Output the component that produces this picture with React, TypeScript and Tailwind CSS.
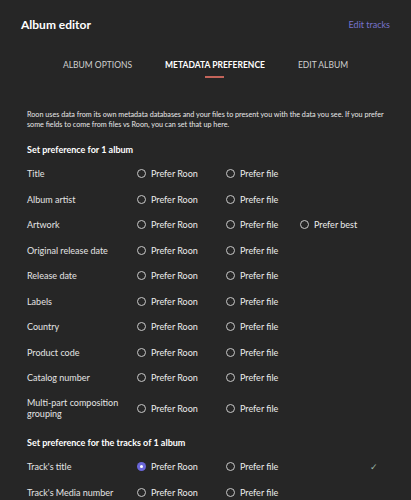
import React from 'react'

type Row = {
  label: string
  lines?: string[]
  best?: boolean
  selected?: 'roon' | 'file'
  check?: boolean
}

const albumRows: Row[] = [
  { label: 'Title' },
  { label: 'Album artist' },
  { label: 'Artwork', best: true },
  { label: 'Original release date' },
  { label: 'Release date' },
  { label: 'Labels' },
  { label: 'Country' },
  { label: 'Product code' },
  { label: 'Catalog number' },
  { label: 'Multi-part composition grouping', lines: ['Multi-part composition', 'grouping'] },
]

const trackRows: Row[] = [
  { label: "Track's title", selected: 'roon', check: true },
  { label: "Track's Media number" },
]

function Radio({ label, on }: { label: string; on?: boolean }) {
  return (
    <div className="flex items-center gap-[5px]">
      {on ? (
        <span className="w-[9px] h-[9px] rounded-full bg-[#6a66d8] flex items-center justify-center">
          <span className="w-[3px] h-[3px] rounded-full bg-white" />
        </span>
      ) : (
        <span className="w-[9px] h-[9px] rounded-full border border-[#c8c8c8]" />
      )}
      <span className="text-[9px] leading-[11px] text-[#ececec]">{label}</span>
    </div>
  )
}

function PrefRow({ row }: { row: Row }) {
  const tall = !!row.lines
  return (
    <div className={`flex items-center ${tall ? 'h-[35.5px]' : 'h-[25.5px]'}`}>
      <div className="w-[110px] text-[9px] leading-[11px] text-[#e4e4e4]">
        {row.lines ? row.lines.map((l) => <div key={l}>{l}</div>) : row.label}
      </div>
      <div className="w-[89px]">
        <Radio label="Prefer Roon" on={row.selected === 'roon'} />
      </div>
      <div className="w-[74px]">
        <Radio label="Prefer file" on={row.selected === 'file'} />
      </div>
      <div className="w-[70px]">{row.best && <Radio label="Prefer best" />}</div>
      {row.check && <span className="text-[9px] text-[#9cb8a9]">✓</span>}
    </div>
  )
}

export default function App() {
  return (
    <div className="w-[411px] h-[500px] overflow-hidden bg-[#262626] text-white font-['Lato','Liberation_Sans',sans-serif]">
      <div className="flex items-center justify-between h-[50px] px-[21px]">
        <h1 className="text-[12px] font-bold">Album editor</h1>
        <button className="text-[9px] text-[#7673cc]">Edit tracks</button>
      </div>

      <div className="flex justify-center gap-[33px] mt-[9px] text-[8.5px] leading-[12px]">
        <span className="text-[#d0d0d0]">ALBUM OPTIONS</span>
        <div className="flex flex-col items-center">
          <span className="font-bold text-white">METADATA PREFERENCE</span>
          <span className="mt-[5px] w-[19px] h-[2px] bg-[#c4645a]" />
        </div>
        <span className="text-[#d0d0d0]">EDIT ALBUM</span>
      </div>

      <div className="px-[27px]">
        <p className="mt-[32px] text-[7.2px] leading-[10px] text-[#e8e8e8]">
          Roon uses data from its own metadata databases and your files to present you with the data you see. If you prefer some fields to come from files vs Roon, you can set that up here.
        </p>

        <h2 className="mt-[14px] text-[9px] leading-[12px] font-bold">Set preference for 1 album</h2>
        <div className="mt-[5px]">
          {albumRows.map((r) => (
            <PrefRow key={r.label} row={r} />
          ))}
        </div>

        <h2 className="mt-[11px] text-[9px] leading-[12px] font-bold">Set preference for the tracks of 1 album</h2>
        <div className="mt-[5px]">
          {trackRows.map((r) => (
            <PrefRow key={r.label} row={r} />
          ))}
        </div>
      </div>
    </div>
  )
}
